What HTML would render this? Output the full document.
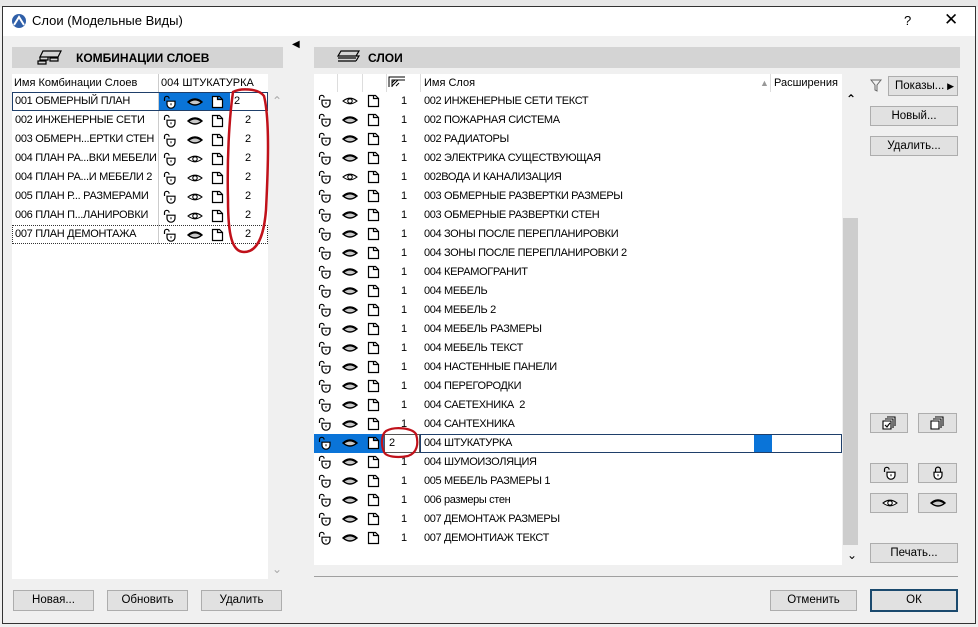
<!DOCTYPE html>
<html><head><meta charset="utf-8">
<style>
*{margin:0;padding:0;box-sizing:border-box}
body{width:978px;height:627px;overflow:hidden;background:#f0f0f0;font-family:"Liberation Sans","DejaVu Sans",sans-serif;font-size:11px;color:#000;position:relative}
.a{position:absolute}
.btn{position:absolute;background:#e1e1e1;border:1px solid #adadad;text-align:center;line-height:19px;font-size:11.5px}
.t{position:absolute;white-space:nowrap}
.r .t{letter-spacing:-0.35px}
.l .t{letter-spacing:-0.3px}
svg.i{position:absolute;width:16px;height:14px}
</style></head><body>
<svg width="0" height="0" style="position:absolute">
<defs>
<symbol id="lk" viewBox="0 0 16 14"><path d="M2.5 6V3.6a2.3 2.3 0 0 1 4.6 0" fill="none" stroke="#000" stroke-width="1.2"/><path d="M5 6.2h8v3a4 4 0 0 1-8 0z" fill="#fff" stroke="#000" stroke-width="1.2"/><path d="M9 8.3v2" stroke="#000" stroke-width="1"/></symbol>
<symbol id="lc" viewBox="0 0 16 14"><path d="M5.5 6V3.6a2.5 2.5 0 0 1 5 0V6" fill="none" stroke="#000" stroke-width="1.2"/><path d="M4 6.2h8v3a4 4 0 0 1-8 0z" fill="#fff" stroke="#000" stroke-width="1.2"/><path d="M8 8.3v2" stroke="#000" stroke-width="1"/></symbol>
<symbol id="ec" viewBox="0 0 16 14"><path d="M1 7Q8 1 15 7Q8 13 1 7z" fill="#c8c8c8" stroke="#000" stroke-width="1.4"/><path d="M1.5 7Q8 2 14.5 7" fill="none" stroke="#000" stroke-width="2"/></symbol>
<symbol id="eo" viewBox="0 0 16 14"><path d="M1 7Q8 1.5 15 7Q8 12.5 1 7z" fill="#fff" stroke="#000" stroke-width="1.1"/><circle cx="8" cy="7" r="2.2" fill="none" stroke="#000" stroke-width="1.1"/></symbol>
<symbol id="dc" viewBox="0 0 16 14"><path d="M2.5 1.5h5v3h5v8h-10z M7.5 1.5l2 0 3 3" fill="#fff" stroke="#000" stroke-width="1.2"/></symbol>
</defs></svg>

<div class="a" style="left:0;top:0;width:978px;height:7px;background:#e8e8e8"></div>
<div class="a" style="left:2px;top:6px;width:974px;height:618px;border:1px solid #333;background:#f0f0f0"></div>
<div class="a" style="left:3px;top:7px;width:972px;height:29px;background:#fff"></div>
<svg class="a" style="left:11px;top:13px" width="16" height="16" viewBox="0 0 16 16"><circle cx="8" cy="8" r="7" fill="#2f5fa8"/><path d="M3 12L8 4l5 8" fill="none" stroke="#fff" stroke-width="2"/></svg>
<div class="t" style="left:32px;top:13px;font-size:13px">Слои (Модельные Виды)</div>
<div class="t" style="left:904px;top:13px;font-size:13px">?</div>
<div class="t" style="left:944px;top:10px;font-size:17px">✕</div>

<div class="a" style="left:12px;top:47px;width:271px;height:21px;background:#d4d4d4"></div>
<svg class="a" style="left:37px;top:50px" width="26" height="15" viewBox="0 0 26 15"><path d="M6 1h18l-3 6H3z M3 7h8v3H3z M13 8h8v3h-8z M1 11h8v3H1z" fill="none" stroke="#000" stroke-width="1.2"/></svg>
<div class="t" style="left:76px;top:51px;font-weight:bold;font-size:12px">КОМБИНАЦИИ СЛОЕВ</div>
<div class="a" style="left:12px;top:74px;width:256px;height:505px;background:#fff"></div>
<div class="a" style="left:158px;top:74px;width:1px;height:170px;background:#ccc"></div>
<div class="t" style="left:14px;top:77px">Имя Комбинации Слоев</div>
<div class="t" style="left:161px;top:77px">004 ШТУКАТУРКА</div>
<div class="t" style="left:272px;top:94px;color:#aaa;font-size:12px">⌃</div>
<div class="t" style="left:272px;top:562px;color:#aaa;font-size:12px">⌄</div>

<div class="a" style="left:12px;top:92px;width:256px;height:19px;border:1px solid #1f3f6a"></div>
<div class="a" style="left:159px;top:93px;width:71px;height:17px;background:#0a74d8"></div>
<div class="a" style="left:12px;top:225px;width:256px;height:19px;border:1px dotted #333"></div>

<div class="l">
<div class="t" style="left:15px;top:95px">001 ОБМЕРНЫЙ ПЛАН</div>
<div class="t" style="left:15px;top:114px">002 ИНЖЕНЕРНЫЕ СЕТИ</div>
<div class="t" style="left:15px;top:133px">003 ОБМЕРН...ЕРТКИ СТЕН</div>
<div class="t" style="left:15px;top:152px">004 ПЛАН РА...ВКИ МЕБЕЛИ</div>
<div class="t" style="left:15px;top:171px">004 ПЛАН РА...И МЕБЕЛИ 2</div>
<div class="t" style="left:15px;top:190px">005 ПЛАН Р... РАЗМЕРАМИ</div>
<div class="t" style="left:15px;top:209px">006 ПЛАН П...ЛАНИРОВКИ</div>
<div class="t" style="left:15px;top:228px">007 ПЛАН ДЕМОНТАЖА</div>
</div>

<svg class="i" style="left:162px;top:95px"><use href="#lk"/></svg><svg class="i" style="left:187px;top:95px"><use href="#ec"/></svg><svg class="i" style="left:210px;top:95px"><use href="#dc"/></svg>
<svg class="i" style="left:162px;top:114px"><use href="#lk"/></svg><svg class="i" style="left:187px;top:114px"><use href="#ec"/></svg><svg class="i" style="left:210px;top:114px"><use href="#dc"/></svg>
<svg class="i" style="left:162px;top:133px"><use href="#lk"/></svg><svg class="i" style="left:187px;top:133px"><use href="#ec"/></svg><svg class="i" style="left:210px;top:133px"><use href="#dc"/></svg>
<svg class="i" style="left:162px;top:152px"><use href="#lk"/></svg><svg class="i" style="left:187px;top:152px"><use href="#eo"/></svg><svg class="i" style="left:210px;top:152px"><use href="#dc"/></svg>
<svg class="i" style="left:162px;top:171px"><use href="#lk"/></svg><svg class="i" style="left:187px;top:171px"><use href="#eo"/></svg><svg class="i" style="left:210px;top:171px"><use href="#dc"/></svg>
<svg class="i" style="left:162px;top:190px"><use href="#lk"/></svg><svg class="i" style="left:187px;top:190px"><use href="#eo"/></svg><svg class="i" style="left:210px;top:190px"><use href="#dc"/></svg>
<svg class="i" style="left:162px;top:209px"><use href="#lk"/></svg><svg class="i" style="left:187px;top:209px"><use href="#eo"/></svg><svg class="i" style="left:210px;top:209px"><use href="#dc"/></svg>
<svg class="i" style="left:162px;top:228px"><use href="#lk"/></svg><svg class="i" style="left:187px;top:228px"><use href="#ec"/></svg><svg class="i" style="left:210px;top:228px"><use href="#dc"/></svg>

<div class="t" style="left:234px;top:95px">2</div>
<div class="t" style="left:245px;top:114px">2</div>
<div class="t" style="left:245px;top:133px">2</div>
<div class="t" style="left:245px;top:152px">2</div>
<div class="t" style="left:245px;top:171px">2</div>
<div class="t" style="left:245px;top:190px">2</div>
<div class="t" style="left:245px;top:209px">2</div>
<div class="t" style="left:245px;top:228px">2</div>

<div class="btn" style="left:13px;top:590px;width:81px;height:21px">Новая...</div>
<div class="btn" style="left:107px;top:590px;width:81px;height:21px">Обновить</div>
<div class="btn" style="left:201px;top:590px;width:81px;height:21px">Удалить</div>

<div class="t" style="left:292px;top:39px;font-size:10px">◀</div>

<div class="a" style="left:314px;top:47px;width:646px;height:21px;background:#d4d4d4"></div>
<svg class="a" style="left:335px;top:50px" width="26" height="15" viewBox="0 0 26 15"><path d="M6 1h18l-3 5H3z M3 8h18 M3 11h18 M21 6l3 0 -3 5" fill="none" stroke="#000" stroke-width="1.2"/></svg>
<div class="t" style="left:368px;top:51px;font-weight:bold;font-size:12px">СЛОИ</div>

<div class="a" style="left:314px;top:74px;width:528px;height:491px;background:#fff"></div>
<div class="a" style="left:337px;top:74px;width:1px;height:18px;background:#ddd"></div>
<div class="a" style="left:362px;top:74px;width:1px;height:18px;background:#ddd"></div>
<div class="a" style="left:386px;top:74px;width:1px;height:18px;background:#ddd"></div>
<div class="a" style="left:420px;top:74px;width:1px;height:18px;background:#ddd"></div>
<div class="a" style="left:770px;top:74px;width:1px;height:18px;background:#ddd"></div>
<svg class="a" style="left:388px;top:76px" width="18" height="12" viewBox="0 0 18 12"><path d="M1 11V1h16 M4 11V4h13 M4 7l3-3 M4 10l6-6 M8 10l3-3" fill="none" stroke="#000" stroke-width="1"/></svg>
<div class="t" style="left:424px;top:77px">Имя Слоя</div>
<div class="t" style="left:760px;top:78px;color:#999;font-size:9px">▲</div>
<div class="t" style="left:774px;top:77px">Расширения</div>

<div class="t" style="left:846px;top:92px;font-size:12px;font-weight:bold">⌃</div>
<div class="a" style="left:843px;top:218px;width:15px;height:327px;background:#cdcdcd"></div>
<div class="t" style="left:847px;top:548px;font-size:12px">⌄</div>

<div class="a" style="left:314px;top:434px;width:70px;height:19px;background:#0a74d8"></div>
<div class="a" style="left:384px;top:434px;width:36px;height:19px;background:#fff;border:1px solid #555"></div>
<div class="a" style="left:420px;top:434px;width:422px;height:19px;border:1px solid #1f3f6a"></div>
<div class="a" style="left:754px;top:435px;width:18px;height:17px;background:#0a74d8"></div>
<div class="t" style="left:389px;top:437px">2</div>

<div class="r">
<div class="t" style="left:424px;top:95px">002 ИНЖЕНЕРНЫЕ СЕТИ ТЕКСТ</div>
<div class="t" style="left:424px;top:114px">002 ПОЖАРНАЯ СИСТЕМА</div>
<div class="t" style="left:424px;top:133px">002 РАДИАТОРЫ</div>
<div class="t" style="left:424px;top:152px">002 ЭЛЕКТРИКА СУЩЕСТВУЮЩАЯ</div>
<div class="t" style="left:424px;top:171px">002ВОДА И КАНАЛИЗАЦИЯ</div>
<div class="t" style="left:424px;top:190px">003 ОБМЕРНЫЕ РАЗВЕРТКИ РАЗМЕРЫ</div>
<div class="t" style="left:424px;top:209px">003 ОБМЕРНЫЕ РАЗВЕРТКИ СТЕН</div>
<div class="t" style="left:424px;top:228px">004 ЗОНЫ ПОСЛЕ ПЕРЕПЛАНИРОВКИ</div>
<div class="t" style="left:424px;top:247px">004 ЗОНЫ ПОСЛЕ ПЕРЕПЛАНИРОВКИ 2</div>
<div class="t" style="left:424px;top:266px">004 КЕРАМОГРАНИТ</div>
<div class="t" style="left:424px;top:285px">004 МЕБЕЛЬ</div>
<div class="t" style="left:424px;top:304px">004 МЕБЕЛЬ 2</div>
<div class="t" style="left:424px;top:323px">004 МЕБЕЛЬ РАЗМЕРЫ</div>
<div class="t" style="left:424px;top:342px">004 МЕБЕЛЬ ТЕКСТ</div>
<div class="t" style="left:424px;top:361px">004 НАСТЕННЫЕ ПАНЕЛИ</div>
<div class="t" style="left:424px;top:380px">004 ПЕРЕГОРОДКИ</div>
<div class="t" style="left:424px;top:399px">004 САЕТЕХНИКА&nbsp; 2</div>
<div class="t" style="left:424px;top:418px">004 САНТЕХНИКА</div>
<div class="t" style="left:424px;top:437px">004 ШТУКАТУРКА</div>
<div class="t" style="left:424px;top:456px">004 ШУМОИЗОЛЯЦИЯ</div>
<div class="t" style="left:424px;top:475px">005 МЕБЕЛЬ РАЗМЕРЫ 1</div>
<div class="t" style="left:424px;top:494px">006 размеры стен</div>
<div class="t" style="left:424px;top:513px">007 ДЕМОНТАЖ РАЗМЕРЫ</div>
<div class="t" style="left:424px;top:532px">007 ДЕМОНТИАЖ ТЕКСТ</div>
</div>
<div id="ric"></div>
<script>
(function(){
var h='';var open={0:1,4:1};
for(var i=0;i<24;i++){var y=94+i*19;
h+='<svg class="i" style="left:317px;top:'+y+'px"><use href="#lk"/></svg>';
h+='<svg class="i" style="left:342px;top:'+y+'px"><use href="#'+(open[i]?'eo':'ec')+'"/></svg>';
h+='<svg class="i" style="left:366px;top:'+y+'px"><use href="#dc"/></svg>';
if(i!=18)h+='<div class="t" style="left:401px;top:'+(y+1)+'px">1</div>';}
document.getElementById('ric').innerHTML=h;})();
</script>

<svg class="a" style="left:870px;top:79px" width="12" height="14" viewBox="0 0 12 14"><path d="M1 1h10L7 6v6L5 11V6z" fill="none" stroke="#666" stroke-width="1"/></svg>
<div class="btn" style="left:888px;top:76px;width:70px;height:20px;text-align:left;padding-left:6px">Показы... <span style="position:absolute;right:3px;font-size:9px">▶</span></div>
<div class="btn" style="left:870px;top:106px;width:88px;height:20px">Новый...</div>
<div class="btn" style="left:870px;top:136px;width:88px;height:20px">Удалить...</div>

<div class="btn" style="left:870px;top:413px;width:38px;height:20px"><svg class="i" style="left:11px;top:2px" viewBox="0 0 16 14"><path d="M5 1h8v9 M3 3h8v9 M1 5h8v8H1z M3 9l2 2 3-4" fill="#fff" stroke="#000" stroke-width="1.1"/></svg></div>
<div class="btn" style="left:918px;top:413px;width:39px;height:20px"><svg class="i" style="left:11px;top:2px" viewBox="0 0 16 14"><path d="M5 1h8v9 M3 3h8v9 M1 5h8v8H1z" fill="#fff" stroke="#000" stroke-width="1.1"/></svg></div>
<div class="btn" style="left:870px;top:463px;width:38px;height:20px"><svg class="i" style="left:11px;top:2px"><use href="#lk"/></svg></div>
<div class="btn" style="left:918px;top:463px;width:39px;height:20px"><svg class="i" style="left:11px;top:2px"><use href="#lc"/></svg></div>
<div class="btn" style="left:870px;top:493px;width:38px;height:20px"><svg class="i" style="left:11px;top:2px"><use href="#eo"/></svg></div>
<div class="btn" style="left:918px;top:493px;width:39px;height:20px"><svg class="i" style="left:11px;top:2px"><use href="#ec"/></svg></div>
<div class="btn" style="left:870px;top:543px;width:88px;height:20px">Печать...</div>

<div class="a" style="left:314px;top:576px;width:644px;height:1px;background:#a0a0a0"></div>
<div class="btn" style="left:770px;top:590px;width:87px;height:21px">Отменить</div>
<div class="btn" style="left:870px;top:589px;width:88px;height:23px;border:2px solid #1b4a6e;line-height:19px">ОК</div>

<svg class="a" style="left:0;top:0" width="978" height="627" viewBox="0 0 978 627">
<path d="M233 92 C240 88 258 88 264 96 C270 120 268 170 266 210 C264 235 258 252 244 252 C232 252 228 235 228 200 C227 160 229 120 233 92 Z" fill="none" stroke="#c0111a" stroke-width="2.5"/>
<path d="M386 431 C395 426 412 428 416 434 C419 444 417 453 408 456 C398 458 386 457 384 452 C381 445 381 435 386 431 Z" fill="none" stroke="#c0111a" stroke-width="2.2"/>
</svg>
</body></html>
